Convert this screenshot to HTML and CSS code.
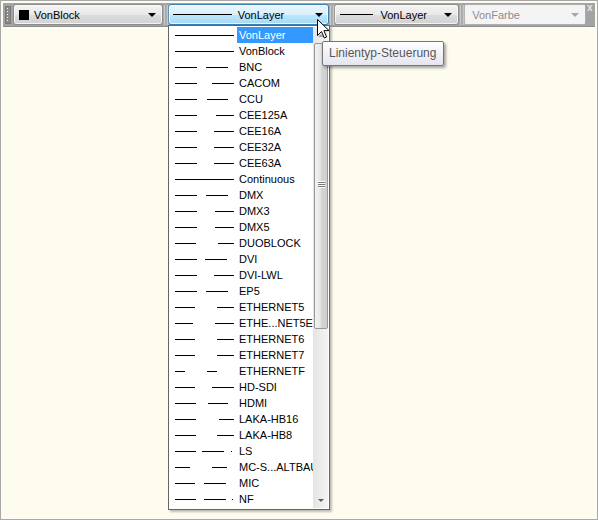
FILE: index.html
```html
<!DOCTYPE html>
<html lang="de">
<head>
    <meta charset="UTF-8">
    <title>Linientyp-Steuerung</title>
    <link rel="stylesheet" href="styles.css">
</head>
<body>
    <div class="window">
        <div class="toolbar">
            <div class="grip"></div>
            <div class="combo combo-color">
                <span class="swatch"></span>
                <span class="label">VonBlock</span>
                <span class="arrow"></span>
            </div>
            <div class="sep"></div>
            <div class="combo combo-linetype active">
                <span class="line long"></span>
                <span class="label">VonLayer</span>
                <span class="arrow"></span>
            </div>
            <div class="sep"></div>
            <div class="combo combo-weight">
                <span class="line short"></span>
                <span class="label">VonLayer</span>
                <span class="arrow"></span>
            </div>
            <div class="sep"></div>
            <div class="combo combo-plot disabled">
                <span class="label">VonFarbe</span>
                <span class="arrow"></span>
            </div>
            <div class="close">x</div>
        </div>

        <div class="dropdown">
            <ul class="list" id="list"></ul>
            <div class="scrollbar">
                <div class="sb-btn up"><span></span></div>
                <div class="sb-track">
                    <div class="sb-thumb"><span class="grip-lines"></span></div>
                </div>
                <div class="sb-btn down"><span></span></div>
            </div>
        </div>

        <div class="tooltip">Linientyp-Steuerung</div>

        <svg class="cursor" width="13" height="21" viewBox="0 0 13 21">
            <path d="M0.5 0.5 L0.5 16.5 L4.5 12.5 L7.3 19 L9.6 18 L6.9 11.6 L12 11.6 Z" fill="#fff" stroke="#000" stroke-width="1"/>
        </svg>
    </div>

    <script>
        // [name, [[start, end], ...]] dash positions in px inside the 60px preview
        const types = [
            ['VonLayer', [[0, 59]]],
            ['VonBlock', [[0, 59]]],
            ['BNC', [[0, 22], [31, 53]]],
            ['CACOM', [[0, 22], [37, 59]]],
            ['CCU', [[0, 22], [32, 53]]],
            ['CEE125A', [[0, 22], [41, 59]]],
            ['CEE16A', [[0, 22], [39, 59]]],
            ['CEE32A', [[0, 22], [39, 59]]],
            ['CEE63A', [[0, 22], [39, 59]]],
            ['Continuous', [[0, 59]]],
            ['DMX', [[0, 22], [31, 53]]],
            ['DMX3', [[0, 22], [40, 59]]],
            ['DMX5', [[0, 22], [40, 59]]],
            ['DUOBLOCK', [[0, 21], [43, 59]]],
            ['DVI', [[0, 22], [30, 52]]],
            ['DVI-LWL', [[0, 22], [39, 59]]],
            ['EP5', [[0, 22], [31, 53]]],
            ['ETHERNET5', [[0, 20], [42, 59]]],
            ['ETHE...NET5E', [[0, 18], [40, 59]]],
            ['ETHERNET6', [[0, 20], [42, 59]]],
            ['ETHERNET7', [[0, 20], [42, 59]]],
            ['ETHERNETF', [[0, 10], [32, 42]]],
            ['HD-SDI', [[0, 20], [37, 59]]],
            ['HDMI', [[0, 21], [33, 53]]],
            ['LAKA-HB16', [[0, 21], [44, 59]]],
            ['LAKA-HB8', [[0, 21], [42, 59]]],
            ['LS', [[0, 21], [27, 49], [56, 57]]],
            ['MC-S...ALTBAU', [[0, 15], [37, 52]]],
            ['MIC', [[0, 20], [29, 51]]],
            ['NF', [[0, 21], [29, 51], [57, 58]]]
        ];

        const list = document.getElementById('list');

        types.forEach((t, i) => {
            const li = document.createElement('li');
            li.className = 'item' + (i === 0 ? ' selected' : '');

            let svg = '<svg class="preview" width="60" height="16" viewBox="0 0 60 16">';
            t[1].forEach(d => {
                svg += '<rect x="' + d[0] + '" y="8" width="' + (d[1] - d[0]) + '" height="1" fill="#000"/>';
            });
            svg += '</svg>';

            li.innerHTML = svg + '<span class="name">' + t[0] + '</span>';
            list.appendChild(li);
        });
    </script>
</body>
</html>
```

FILE: styles.css
```css
* {
    margin: 0;
    padding: 0;
    box-sizing: border-box;
}

body {
    font-family: "Liberation Sans", Arial, sans-serif;
    font-size: 11px;
    color: #000;
    background-color: #fdfbf0;
    overflow: hidden;
}

.window {
    position: relative;
    width: 598px;
    height: 520px;
    border: 1px solid #a8a8a8;
    background-color: #fefcef;
    padding-top: 2px;
    padding-left: 2px;
}

.toolbar {
    display: flex;
    align-items: center;
    width: 592px;
    height: 24px;
    padding: 0 0 0 1px;
    background-color: #a3a3a3;
    border-bottom: 1px solid #8e8e8e;
}

.grip {
    width: 6px;
    height: 18px;
    margin: 0 2px 0 1px;
    background-image: radial-gradient(circle, #f4f4f4 0.8px, transparent 1px);
    background-size: 3px 3px;
    background-color: #8a8a8a;
    border: 1px solid #7a7a7a;
}

.combo {
    display: flex;
    align-items: center;
    height: 21px;
    padding: 0 6px 0 5px;
    border: 1px solid #8c8c8c;
    border-radius: 3px;
    background: linear-gradient(#f4f4f4, #e9e9e9 50%, #dcdcdc 51%, #d2d2d2);
    box-shadow: inset 0 0 0 1px rgba(255, 255, 255, 0.7);
}

.combo .label {
    flex: 1;
    white-space: nowrap;
}

.combo .arrow {
    width: 0;
    height: 0;
    border-left: 4px solid transparent;
    border-right: 4px solid transparent;
    border-top: 4px solid #000;
}

.combo-color {
    width: 150px;
}

.combo-color .swatch {
    width: 10px;
    height: 10px;
    margin-right: 5px;
    background-color: #000;
}

.combo-linetype {
    width: 162px;
    padding-left: 4px;
    padding-right: 5px;
}

.combo-linetype .line {
    width: 59px;
    height: 1px;
    margin-right: 6px;
    background-color: #000;
}

.combo-linetype .label,
.combo-weight .label {
    flex: none;
    margin-right: auto;
}

.combo.active {
    border-color: #3c7fb1;
    background: linear-gradient(#eaf6fd, #d9f0fc 50%, #bee6fd 51%, #a7d9f5);
}

.combo-weight {
    width: 125px;
}

.combo-weight .line {
    width: 33px;
    height: 1px;
    margin-right: 7px;
    background-color: #000;
}

.combo.disabled {
    width: 122px;
    padding-left: 7px;
    color: #8d8d8d;
    border-color: #adadad;
    border-radius: 2px;
    background: #f4f4f4;
    box-shadow: none;
}

.combo.disabled .arrow {
    border-top-color: #a5a5a5;
}

.sep {
    width: 6px;
    height: 20px;
    border-left: 2px solid #c8c8c8;
    border-right: 2px solid #c8c8c8;
    margin: 0 -1px 0 0;
    transform: scaleX(0.75);
}

.close {
    width: 8px;
    align-self: flex-start;
    margin-left: 1px;
    font-size: 10px;
    font-weight: bold;
    line-height: 9px;
    color: #e8e8e8;
}

.dropdown {
    position: absolute;
    left: 167px;
    top: 24px;
    width: 162px;
    height: 485px;
    display: flex;
    padding: 1px;
    border: 1px solid #646464;
    background-color: #fff;
    box-shadow: 2px 2px 2px rgba(0, 0, 0, 0.25);
}

.list {
    flex: 1;
    min-width: 0;
    list-style: none;
}

.item {
    display: flex;
    align-items: center;
    height: 16px;
}

.preview {
    flex: none;
    margin: 0 2px 0 5px;
}

.name {
    flex: 1;
    min-width: 0;
    height: 16px;
    line-height: 16px;
    padding-left: 2px;
    white-space: nowrap;
    overflow: hidden;
}

.item.selected .name {
    background-color: #3399ff;
    color: #fff;
}

.scrollbar {
    display: flex;
    flex-direction: column;
    width: 15px;
    flex: none;
    padding-top: 1px;
    background: linear-gradient(to right, #e4e4e4, #f4f4f4);
}

.sb-btn {
    display: flex;
    align-items: center;
    justify-content: center;
    height: 15px;
    flex: none;
}

.sb-btn span {
    width: 0;
    height: 0;
    border-left: 3px solid transparent;
    border-right: 3px solid transparent;
}

.sb-btn.up span {
    border-bottom: 3px solid #a0a0a0;
}

.sb-btn.down span {
    border-top: 3px solid #606060;
}

.sb-track {
    flex: 1;
}

.sb-thumb {
    display: flex;
    align-items: center;
    justify-content: center;
    height: 286px;
    margin: 0 0 0 1px;
    border: 1px solid #979797;
    border-radius: 2px;
    background: linear-gradient(to right, #f3f3f3, #e6e6e6 45%, #d5d5d5 50%, #cfcfcf);
}

.grip-lines {
    width: 7px;
    height: 7px;
    margin-top: -3px;
    background: repeating-linear-gradient(#fff 0 1px, #777 1px 2px);
}

.tooltip {
    position: absolute;
    left: 321px;
    top: 40px;
    padding: 4px 7px 5px 6px;
    border: 1px solid #767676;
    border-radius: 2px;
    background: linear-gradient(#ffffff, #e4e5f0);
    color: #575757;
    font-size: 12px;
    white-space: nowrap;
    box-shadow: 2px 2px 3px rgba(0, 0, 0, 0.35);
}

.cursor {
    position: absolute;
    left: 316px;
    top: 18px;
}
```
